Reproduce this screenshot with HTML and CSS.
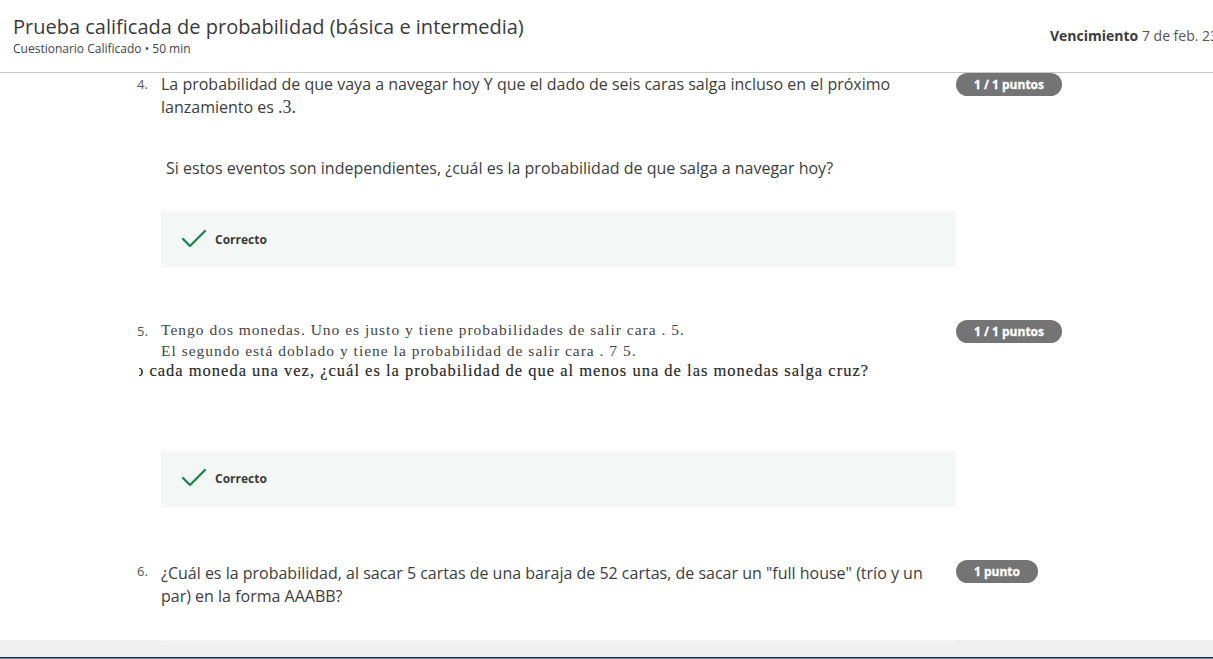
FILE: index.html
```html
<!DOCTYPE html>
<html lang="es">
<head>
<meta charset="utf-8">
<title>Prueba calificada de probabilidad</title>
<link rel="stylesheet" href="styles.css">
</head>
<body>
<div class="page">
  <header class="header">
    <div class="header-left">
      <h1 class="title">Prueba calificada de probabilidad (básica e intermedia)</h1>
      <div class="subtitle">Cuestionario Calificado • 50 min</div>
    </div>
    <div class="due"><b>Vencimiento</b> 7 de feb. 23:59</div>
  </header>

  <main class="content">
    <section class="question q4">
      <div class="qnum">4.</div>
      <div class="qbody">
        <p class="qtext">La probabilidad de que vaya a navegar hoy Y que el dado de seis caras salga incluso en el próximo lanzamiento es <span class="math">.3.</span></p>
        <p class="qtext sub">Si estos eventos son independientes, ¿cuál es la probabilidad de que salga a navegar hoy?</p>
        <div class="answer">
          <svg class="check" width="26" height="20" viewBox="0 0 26 20"><path d="M2 10 L9 17 L24 2" fill="none" stroke="#1f8556" stroke-width="2.4" stroke-linecap="round" stroke-linejoin="round"/></svg>
          <span class="answer-label">Correcto</span>
        </div>
      </div>
      <div class="badge wide">1 / 1 puntos</div>
    </section>

    <section class="question q5">
      <div class="qnum">5.</div>
      <div class="qbody">
        <div class="serif">
          <div class="sline">Tengo dos monedas. Uno es justo y tiene probabilidades de salir cara . 5.</div>
          <div class="sline">El segundo está doblado y tiene la probabilidad de salir cara . 7 5.</div>
          <div class="sline clipped"><span>o cada moneda una vez, ¿cuál es la probabilidad de que al menos una de las monedas salga cruz?</span></div>
        </div>
        <div class="answer a2">
          <svg class="check" width="26" height="20" viewBox="0 0 26 20"><path d="M2 10 L9 17 L24 2" fill="none" stroke="#1f8556" stroke-width="2.4" stroke-linecap="round" stroke-linejoin="round"/></svg>
          <span class="answer-label">Correcto</span>
        </div>
      </div>
      <div class="badge wide b5">1 / 1 puntos</div>
    </section>

    <section class="question q6">
      <div class="qnum">6.</div>
      <div class="qbody">
        <p class="qtext">¿Cuál es la probabilidad, al sacar 5 cartas de una baraja de 52 cartas, de sacar un "full house" (trío y un par) en la forma AAABB?</p>
      </div>
      <div class="badge narrow">1 punto</div>
    </section>
  </main>

  <div class="bottom-band"><div class="bottom-inner"></div></div>
  <div class="taskbar"></div>
</div>
</body>
</html>
```

FILE: styles.css
```css
* { box-sizing: border-box; }
html, body { margin: 0; padding: 0; }
body {
  width: 1213px;
  height: 659px;
  overflow: hidden;
  background: #fff;
  font-family: "Open Sans", "Liberation Sans", sans-serif;
  color: #333;
}
.page {
  height: 659px;
  display: flex;
  flex-direction: column;
}
.header {
  height: 73px;
  flex: none;
  display: flex;
  justify-content: space-between;
  border-bottom: 1px solid #c8c8c8;
  padding: 13px 0 0 13px;
  white-space: nowrap;
}
.title {
  margin: 0;
  font-size: 20px;
  font-weight: 400;
  line-height: 28px;
  color: #3a3a3a;
}
.subtitle {
  font-size: 12px;
  line-height: 15px;
  color: #444;
}
.due {
  font-size: 14px;
  line-height: 20px;
  color: #555;
  margin-top: 13px;
  width: 163px;
  overflow: hidden;
  flex: none;
}
.due b { color: #3b3b3b; font-weight: 700; }

.content {
  flex: 1;
  padding-left: 137px;
}
.question {
  display: flex;
  align-items: flex-start;
}
.qnum {
  width: 24px;
  flex: none;
  font-size: 13px;
  color: #555;
  line-height: 23px;
}
.qbody {
  width: 795px;
  flex: none;
}
.qtext {
  margin: 0;
  font-size: 16px;
  line-height: 23px;
  color: #3d3d3d;
}
.qtext.sub {
  margin-top: 38px;
  padding-left: 5px;
}
.math {
  font-family: "Liberation Serif", "DejaVu Serif", serif;
  font-size: 18px;
  line-height: 1;
}
.answer {
  margin-top: 31px;
  height: 56px;
  background: #f3f8f6;
  display: flex;
  align-items: center;
  padding-left: 20px;
}
.answer.a2 { margin-top: 69px; }
.check { display: block; margin-right: 8px; margin-top: -1px; }
.answer-label {
  font-size: 12px;
  font-weight: 700;
  color: #3a3a3a;
}
.badge {
  flex: none;
  height: 23px;
  border-radius: 12px;
  background: #747474;
  color: #fff;
  font-size: 12px;
  font-weight: 700;
  line-height: 23px;
  text-align: center;
  -webkit-text-stroke: 0.3px #fff;
}
.badge.wide { width: 106px; }
.badge.narrow { width: 82px; }

.q5 { margin-top: 53px; }
.q5 .qnum { line-height: 20px; padding-top: 1px; }
.serif {
  font-family: "Liberation Serif", "DejaVu Serif", serif;
  font-size: 15.5px;
  line-height: 20.5px;
  color: #444;
  letter-spacing: 1px;
}
.sline { white-space: nowrap; }
.sline.clipped {
  margin-left: -22px;
  overflow: hidden;
  color: #262626;
  font-size: 16.5px;
  letter-spacing: 1px;
}
.sline.clipped span {
  display: inline-block;
  margin-left: -4px;
  -webkit-text-stroke: 0.15px #262626;
}
.q6 { margin-top: 53px; }
.q6 .qtext { margin-top: 2px; }

.bottom-band {
  flex: none;
  height: 17px;
  background: #f0f0f0;
  padding-left: 161px;
}
.bottom-inner {
  width: 795px;
  height: 1px;
  background: #f6f6f6;
}
.taskbar {
  flex: none;
  height: 2px;
  border-top: 1px solid #1d2733;
  background: #6a8bb5;
}
```
